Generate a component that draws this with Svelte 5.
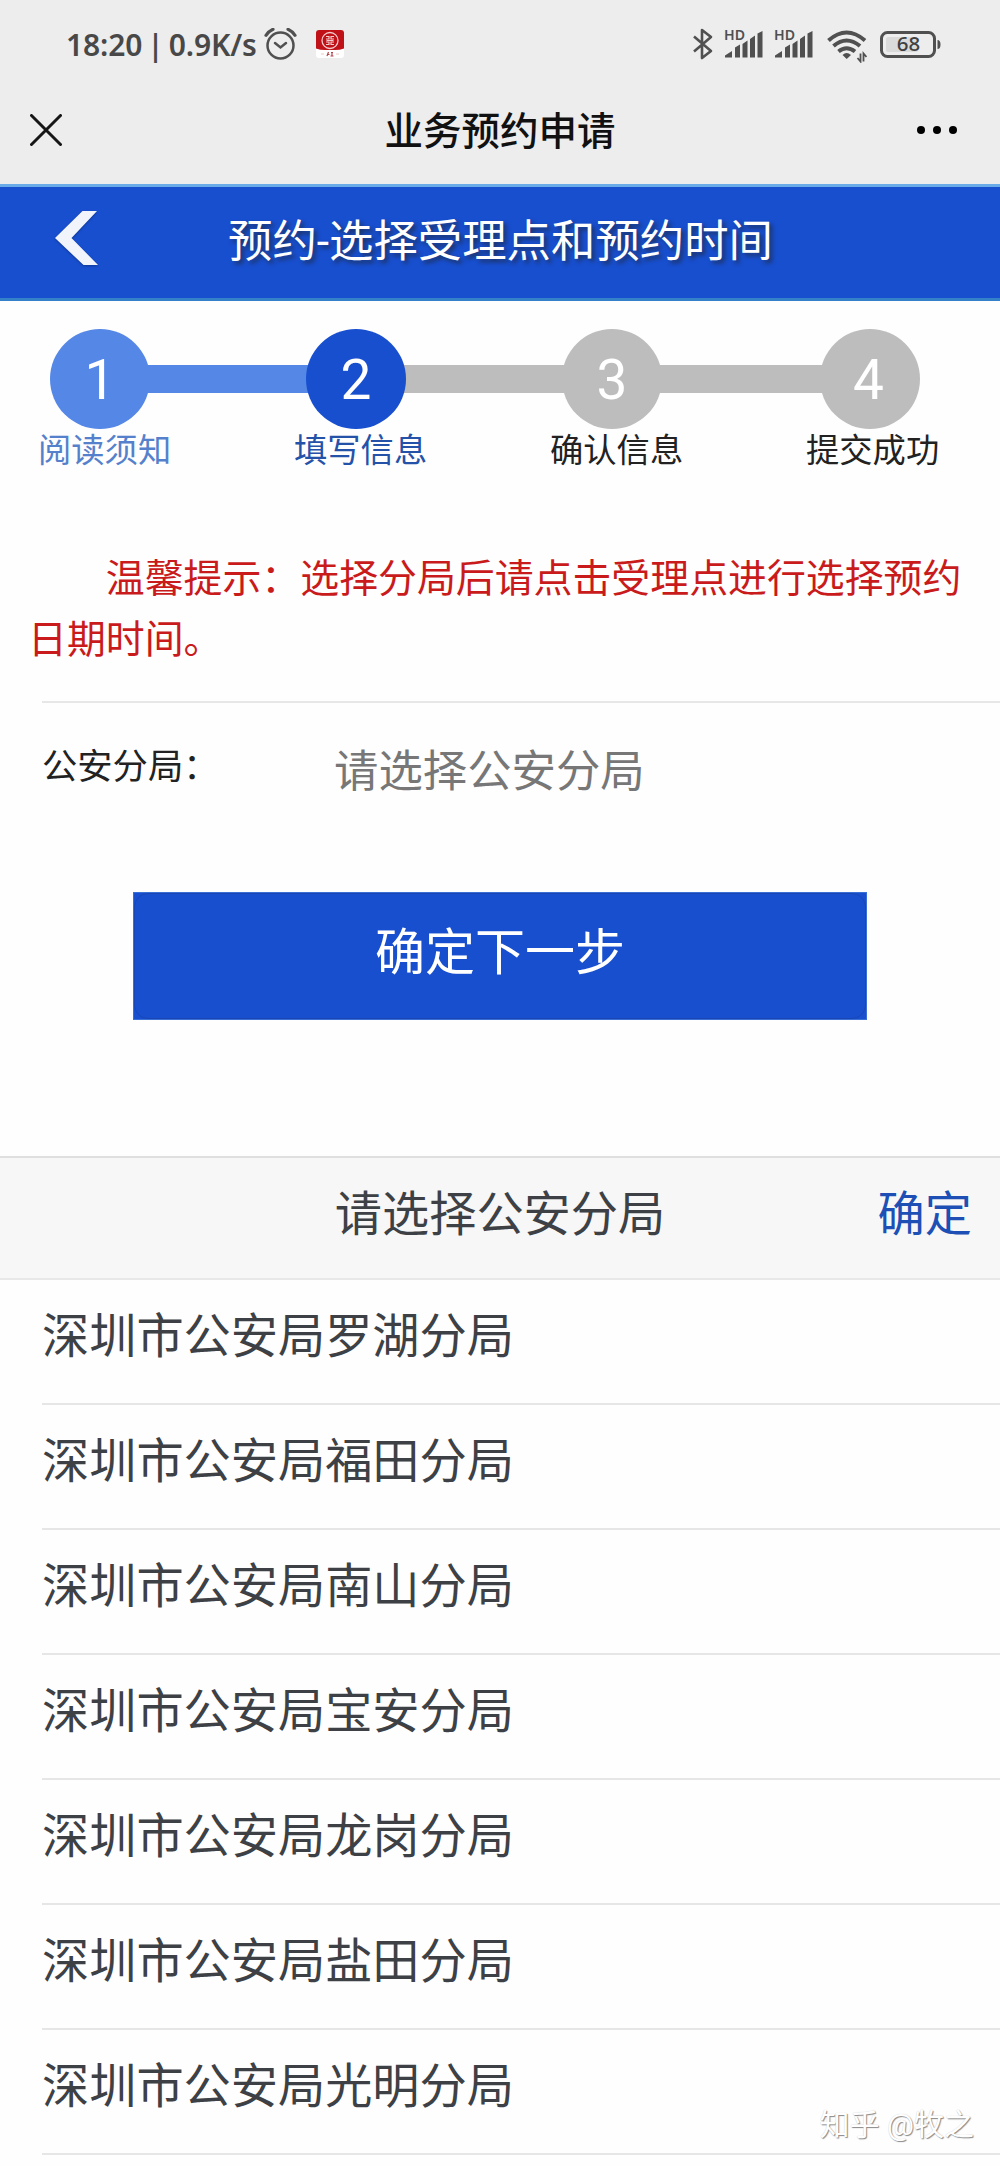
<script>
  const steps = [
    { n: 1, label: '阅读须知', state: 'done' },
    { n: 2, label: '填写信息', state: 'current' },
    { n: 3, label: '确认信息', state: 'todo' },
    { n: 4, label: '提交成功', state: 'todo' }
  ];
  const districts = ['罗湖', '福田', '南山', '宝安', '龙岗', '盐田', '光明'];
</script>

{#snippet signal()}
  <svg class="signal" width="39" height="31" viewBox="0 -1 39 31">
    <text x="0" y="11" textLength="21" lengthAdjust="spacingAndGlyphs">HD</text>
    <path d="M1 28.500v-2l7-4.500v6.500zM11 28.500v-10l5-3v13zM18.500 28.500v-13.500l5-3.500v17zM26 28.500v-18.500l5-3.500v22zM33.500 28.500v-24l5-2.500v26.500z" />
  </svg>
{/snippet}

<div class="screen">
  <div class="status">
    <span class="clock">18:20 | 0.9K/s</span>
    <svg class="alarm" width="33" height="33" viewBox="0 0 33 33" fill="none">
      <circle cx="16.500" cy="17.500" r="13" />
      <path d="M11 15l5.500 4.500 5.500-4.500" />
      <path class="bells" d="M2 7.300q3-4.300 7-6M31 7.300q-3-4.300-7-6" />
    </svg>
    <svg class="bank" width="28" height="28" viewBox="0 0 28 28">
      <rect width="28" height="28" rx="3" fill="#fff" />
      <path d="M3 0h22q3 0 3 3v15.500q-4 1.500-9 1.500H9q-5 0-9-1.500V3q0-3 3-3z" fill="#c01018" />
      <circle cx="14" cy="10.500" r="8" fill="none" stroke="#f3cccc" stroke-width="1.300" />
      <path d="M10 6.500h3v2.500h-3M18 6.500h-3v2.500h3M10 14.500h3V12h-3M18 14.500h-3V12h3M10.500 10.500h7" stroke="#f3cccc" stroke-width="1.200" fill="none" />
      <path d="M5 24h3M20 24h3" stroke="#f0c4c4" />
      <path d="M12.500 22l-1.500 4M11 24.500h2.500M15 22.500h2M16 22.500V26M14.500 26h3" stroke="#b5444a" stroke-width="1.200" fill="none" />
    </svg>
    <svg class="bluetooth" width="20" height="32" viewBox="0 0 20 32" fill="none">
      <path d="M1 8.500L18 23l-9 7V2l9 7L1 23.500" />
    </svg>
    {@render signal()}
    {@render signal()}
    <svg class="wifi" width="40" height="34" viewBox="0 0 40 34" fill="none">
      <path d="M1.500 11.500q18-16 36.500 0M6.500 17q13-11 26.500 0M11.500 22.500q8-6.500 16.500 0" />
      <path d="M15.500 26q4-4 8.500 0l-4.300 4z" class="solid" />
      <path d="M33.500 24.500v8l-3-3.500M36.500 32.500v-8l3 3.500" class="thin" />
    </svg>
    <svg class="battery" width="61" height="27" viewBox="0 0 61 27">
      <rect x="6" y="6" width="32" height="15" rx="2" fill="#dadada" />
      <rect x="1.500" y="1.500" width="53" height="24" rx="6" fill="none" stroke="#505050" stroke-width="3" />
      <path d="M57.500 9q3 0 3 4.500t-3 4.500z" fill="#505050" />
      <text x="28.500" y="20" text-anchor="middle">68</text>
    </svg>
  </div>

  <div class="nav">
    <svg class="close" width="32" height="32" viewBox="0 0 32 32"><path d="M1.500 1.500l29 29M30.500 1.500l-29 29" /></svg>
    <h1>业务预约申请</h1>
    <div class="dots"><i></i><i></i><i></i></div>
  </div>

  <header>
    <svg class="back" width="46" height="58" viewBox="0 0 46 58">
      <path d="M28.500 1H43L17.500 28 44 55H29.500L1 28z" />
    </svg>
    <h2>预约-选择受理点和预约时间</h2>
  </header>

  <ol class="steps">
    {#each steps as step}
      <li class={step.state}>
        <div class="track"><b>{step.n}</b></div>
        <span>{step.label}</span>
      </li>
    {/each}
  </ol>

  <p class="notice">温馨提示：选择分局后请点击受理点进行选择预约日期时间。</p>

  <div class="field">
    <label for="bureau">公安分局：</label>
    <input id="bureau" placeholder="请选择公安分局" readonly />
  </div>

  <div class="submit"><button><em>确定下一步</em></button></div>

  <section class="picker">
    <div class="bar"><span class="name">请选择公安分局</span><a href="#ok">确定</a></div>
    <ul>
      {#each districts as d}
        <li>深圳市公安局{d}分局</li>
      {/each}
    </ul>
  </section>

  <div class="mark">知乎 @牧之</div>
</div>

<style>
  :global(body) { background: #fefefe; overflow: hidden; }
  .screen, .screen * { box-sizing: border-box; }
  .screen {
    position: relative;
    width: 1000px;
    height: 2166px;
    overflow: hidden;
    background: #fefefe;
    font-family: Roboto, "Noto Sans CJK SC", sans-serif;
    color: #222;
  }
  h1, h2, p, ul, ol { margin: 0; padding: 0; font-weight: 400; list-style: none; }

  .status {
    display: flex;
    align-items: flex-start;
    height: 86px;
    padding: 0 59px 0 66px;
    background: #ededed;
  }
  .clock {
    width: 191px;
    margin-top: 25px;
    font: 600 30px/40px "Noto Sans", sans-serif;
    letter-spacing: -0.150px;
    word-spacing: -2.500px;
    color: #484848;
    white-space: nowrap;
  }
  .alarm { margin: 28px 0 0 7px; stroke: #505050; stroke-width: 2.500; stroke-linecap: round; }
  .alarm .bells { stroke-width: 3.200; }
  .bank { margin: 30px 0 0 19px; }
  .bluetooth { margin: 28px 0 0 auto; stroke: #505050; stroke-width: 2.600; stroke-linejoin: round; }
  .signal { margin: 28px 0 0 11px; fill: #505050; overflow: visible; }
  .signal text { font: 600 14px "Noto Sans", sans-serif; }
  .wifi { margin: 29px 0 0 14px; stroke: #505050; stroke-width: 4; }
  .wifi .solid { fill: #505050; stroke: none; }
  .wifi .thin { stroke-width: 1.800; }
  .battery { margin: 31px 0 0 13px; }
  .battery text { font: 500 20.500px "Noto Sans", sans-serif; fill: #404040; }

  .nav {
    display: grid;
    grid-template-columns: 100px 1fr 100px;
    align-items: center;
    height: 98px;
    padding-bottom: 10px;
    background: #ededed;
  }
  .close { margin: 0 0 0 30px; stroke: #161616; stroke-width: 3; stroke-linecap: round; }
  .nav h1 { padding-top: 3px; font-size: 38.500px; font-weight: 500; line-height: 60px; text-align: center; color: #111; }
  .dots { display: flex; gap: 8px; margin-left: 17px; }
  .dots i { width: 8px; height: 8px; border-radius: 50%; background: #000; }

  header {
    display: flex;
    align-items: center;
    height: 117px;
    border-top: 3px solid #6aabe9;
    border-bottom: 3px solid #3581c9;
    background: #184fcf;
  }
  .back { margin: -7px 0 0 54px; fill: #f2f4fb; filter: drop-shadow(0 1px 1px #0d3793); }
  header h2 {
    margin: -2px 0 0 128px;
    font-size: 44.400px;
    line-height: 64px;
    color: #fff;
    text-shadow: 3px 3px 4px rgba(30, 40, 60, 0.750);
    white-space: nowrap;
  }

  .steps { display: grid; grid-template-columns: repeat(4, 256px); height: 226px; padding: 27.500px 0 0 50px; }
  .track { display: flex; align-items: center; height: 100px; }
  .track::after { content: ''; flex: 1; height: 28px; margin: 0 -4px; background: #bdbdbd; }
  li:last-child .track::after { visibility: hidden; }
  .track b {
    z-index: 1;
    width: 100px;
    height: 100px;
    border-radius: 50%;
    background: #bdbdbd;
    color: #fff;
    font-size: 55px;
    font-weight: 400;
    line-height: 102px;
    text-align: center;
  }
  li:last-child b { margin-left: 2px; padding-right: 3px; }
  .steps span { display: block; margin: -3px 0 0 -12px; font-size: 33.300px; line-height: 50px; }
  .done b, .done .track::after { background: #5587e6; }
  .done span { color: #5581cc; }
  .current b { background: #184fcf; }
  .current span { color: #2452a8; }

  .notice {
    height: 174px;
    padding: 21px 30px 0 28px;
    font-size: 38.900px;
    line-height: 61px;
    text-indent: 2em;
    color: #c91b1b;
  }

  .field {
    display: flex;
    align-items: flex-start;
    height: 191px;
    margin-left: 42px;
    border-top: 2px solid #e7e7e7;
  }
  .field label { width: 292px; margin-top: 38px; font-size: 35.300px; line-height: 52px; }
  .field input {
    width: 500px;
    height: 66px;
    margin-top: 36px;
    padding: 0;
    border: 0;
    outline: 0;
    background: none;
    font: 44.400px Roboto, "Noto Sans CJK SC", sans-serif;
  }
  .field input::placeholder { color: #777; opacity: 1; }

  .submit { height: 264px; padding: 0 133px; }
  .submit button {
    display: block;
    width: 734px;
    height: 128px;
    padding: 0;
    border: 1px solid #3a70d6;
    background: #184fcf;
  }
  .submit em {
    display: block;
    height: 126px;
    border: 1px solid #1a46b4;
    border-radius: 14px;
    color: #fff;
    font: 50px/119px Roboto, "Noto Sans CJK SC", sans-serif;
  }

  .bar {
    display: grid;
    grid-template-columns: 1fr auto 1fr;
    height: 124px;
    border-top: 2px solid #dfdfdf;
    border-bottom: 2px solid #e8e8e8;
    background: #f7f7f7;
    font-size: 47.200px;
    line-height: 115px;
    color: #3d4145;
  }
  .name { grid-column: 2; }
  .bar a { padding-right: 28px; text-align: right; color: #1d4fb5; text-decoration: none; }
  .picker li {
    height: 125px;
    margin-left: 42px;
    border-bottom: 2px solid #e6e6e6;
    font-size: 47.200px;
    line-height: 115px;
    color: #3d4145;
  }

  .mark {
    position: absolute;
    right: 26px;
    bottom: 19px;
    font-size: 30px;
    line-height: 44px;
    color: #fff;
    text-shadow: 1px 1px 1px #888, 0 0 1px #ccc;
    white-space: nowrap;
  }
</style>
